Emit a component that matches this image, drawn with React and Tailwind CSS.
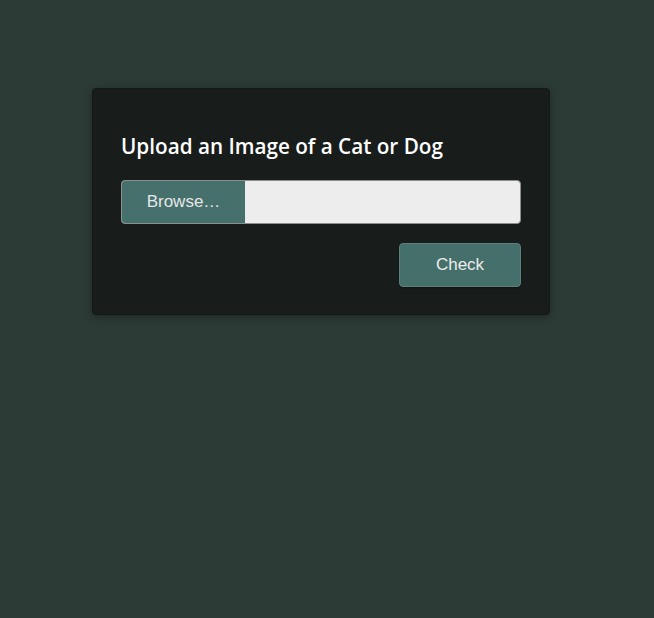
export default function App() {
  return (
    <div className="min-h-[618px] w-full bg-[#2d3b37] pt-[88px]" style={{ fontFamily: '"Liberation Sans", Arial, sans-serif' }}>
      {/* Card */}
      <div className="ml-[92px] w-[458px] rounded-[4px] border border-[#141816] bg-[#181d1b] px-[28px] pt-[43px] pb-[27px] shadow-[0_2px_10px_rgba(0,0,0,0.35)]">
        <h2
          className="text-[20.7px] font-semibold leading-[28px] text-white"
          style={{ fontFamily: '"Open Sans", "Noto Sans", sans-serif' }}
        >
          Upload an Image of a Cat or Dog
        </h2>

        {/* File input */}
        <div className="mt-[20px] flex h-[44px] w-[400px] overflow-hidden rounded-[4px] border border-[#8a8f8d] bg-[#ededed]">
          <button className="w-[123px] bg-[#46706c] text-[17px] text-[#e6e6e6]">
            Browse…
          </button>
          <div className="flex-1" />
        </div>

        {/* Check */}
        <div className="mt-[19px] flex justify-end">
          <button className="h-[44px] w-[122px] rounded-[4px] border border-[#5d807c] bg-[#456f6b] text-[17px] text-[#ececec] shadow-[0_1px_2px_rgba(0,0,0,0.4)]">
            Check
          </button>
        </div>
      </div>
    </div>
  );
}
